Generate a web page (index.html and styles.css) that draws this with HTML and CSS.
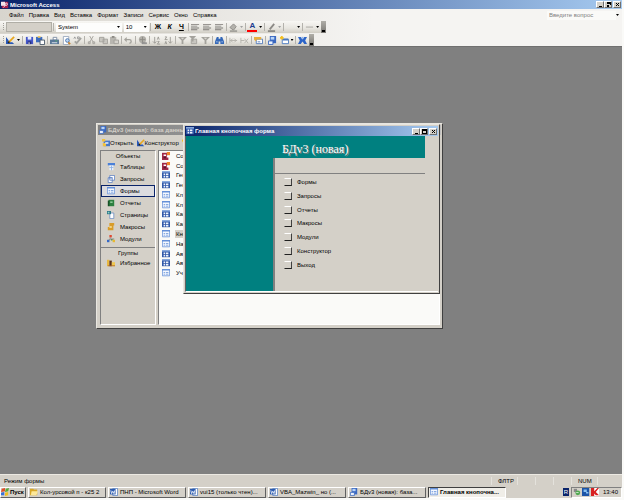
FILE: index.html
```html
<!DOCTYPE html>
<html lang="ru">
<head>
  <meta charset="UTF-8">
  <meta name="viewport" content="width=device-width, initial-scale=1.0">
  <title>Microsoft Access</title>
  <link rel="stylesheet" href="styles.css">
</head>
<body>

  <svg class="sprite" aria-hidden="true">
    <symbol id="i-access" viewBox="0 0 10 10"><path fill="#a8204c" d="M1 1h8v8H1z"/><path fill="#f4e4ea" d="M0 1h5v5H0z"/><path d="M3 8l3-3" stroke="#fff"/><circle cx="6.500" cy="4" r="1.500" fill="none" stroke="#fff"/></symbol>
    <symbol id="i-macrodb" viewBox="0 0 10 10"><path fill="#a02848" d="M0 1h8v9H0z"/><path fill="#f0842c" d="M6 0h4v4H6z"/><path fill="#fff" d="M2 3h3v2H2zM6 4h3v3H6z"/><path fill="#5a1830" d="M2 6h3v2H2z"/></symbol>
    <symbol id="i-design" viewBox="0 0 10 10"><path fill="#2858b8" d="M0 1v8h9L7 7H3V5z"/><path d="M3 7l6-6" stroke="#e8a820" stroke-width="2"/><path fill="#222" d="M2 6h2v2H2z"/></symbol>
    <symbol id="i-save" viewBox="0 0 10 10"><path fill="#4456c8" d="M1 1h8v8H1z"/><path fill="#e8ecfc" d="M3 1h4v3H3z"/><path fill="#26307c" d="M3 6h4v3H3z"/><path fill="#fff" d="M4 7h1v2H4z"/></symbol>
    <symbol id="i-lookup" viewBox="0 0 10 10"><path fill="#3c6cc0" d="M0 1h7v6H0z"/><path fill="#f0c860" d="M2 0h3v2H2z"/><path fill="#fff" stroke="#456" d="M4.500 4.500h5v5h-5z"/></symbol>
    <symbol id="i-print" viewBox="0 0 10 10"><path fill="#fff" stroke="#7a8aa0" d="M3.500 1.500h4v3h-4z"/><path fill="#5a7898" d="M0 4h10v5H0z"/><path fill="#58b068" d="M6 5h2v1H6z"/><path fill="#dfe6ee" d="M2 7h6v1H2z"/></symbol>
    <symbol id="i-preview" viewBox="0 0 10 10"><path fill="#fff" stroke="#9aa8bc" d="M1.500.500h6v9h-6z"/><circle cx="6" cy="5" r="2" fill="#bcd8f4" stroke="#4870a8"/><path d="M7 7l2 2" stroke="#c88430" stroke-width="2"/></symbol>
    <symbol id="i-check" viewBox="0 0 10 10"><path d="M1 3l1-2 1 2M5 1h2v2H5z" fill="none" stroke="#999"/><path d="M2 6l2 2 5-6" fill="none" stroke="#a4a4a0" stroke-width="2"/></symbol>
    <symbol id="i-cut" viewBox="0 0 10 10"><path d="M3 0l4 7M7 0L3 7" stroke="#a4a29c"/><path fill="none" stroke="#a4a29c" d="M1.500 6.500h2v2h-2zM6.500 6.500h2v2h-2z"/></symbol>
    <symbol id="i-copy" viewBox="0 0 10 10"><path fill="#c8c6c0" stroke="#a4a29c" d="M.500 1.500h5v5h-5zM4.500 3.500h5v5h-5z"/></symbol>
    <symbol id="i-paste" viewBox="0 0 10 10"><path fill="#b8b6b0" d="M0 1h7v8H0z"/><path fill="#d4d2cc" stroke="#a09e98" d="M4.500 4.500h5v4h-5z"/><path fill="#8c8a84" d="M2 0h3v2H2z"/></symbol>
    <symbol id="i-undo" viewBox="0 0 10 10"><path d="M2 4h4q2 0 2 2t-2 2" fill="none" stroke="#a4a29c" stroke-width="1.500"/><path fill="#a4a29c" d="M0 4l3-3v6z"/></symbol>
    <symbol id="i-globe" viewBox="0 0 10 10"><circle cx="5" cy="4" r="4" fill="#b0aea8"/><path fill="none" stroke="#8c8a84" d="M2 4h6M5 1v6"/><path fill="none" stroke="#888" d="M4.500 7.500h5v1h-5z"/></symbol>
    <symbol id="i-sortup" viewBox="0 0 10 10"><path d="M3 1v7M1 6l2 2 2-2M6 4l1-3 1 3M6 6h2l-2 3h3" fill="none" stroke="#9c9a94"/></symbol>
    <symbol id="i-sortdown" viewBox="0 0 10 10"><path d="M7 1v7M5 6l2 2 2-2M1 1h2L1 4h3M1 9l1-3 1 3" fill="none" stroke="#9c9a94"/></symbol>
    <symbol id="i-filter" viewBox="0 0 10 10"><path fill="#a4a29c" d="M0 1h10L6 5v4H4V5z"/><path fill="#d8d6d0" d="M3 2h4L5 4z"/></symbol>
    <symbol id="i-filterform" viewBox="0 0 10 10"><path fill="#c8c6c0" stroke="#a4a29c" d="M2.500 3.500h6v5h-6z"/><path fill="#a4a29c" d="M0 0h8L5 3v3H3V3z"/></symbol>
    <symbol id="i-find" viewBox="0 0 10 10"><path fill="#3468b8" d="M2 1h2v2h2V1h2l2 5v3H6V6H4v3H0V6z"/><path fill="#b8d0f0" d="M1 6h2v1H1zM7 6h2v1H7z"/></symbol>
    <symbol id="i-newrec" viewBox="0 0 10 10"><path d="M1 2v6M1 5h8M4 3l-2 2 2 2M6 3l2 2-2 2" fill="none" stroke="#b4b2ac"/></symbol>
    <symbol id="i-delrec" viewBox="0 0 10 10"><path d="M1 2v6M1 5h4M5 3l4 5M9 3L5 8" fill="none" stroke="#b4b2ac"/></symbol>
    <symbol id="i-props" viewBox="0 0 10 10"><path fill="#fff" stroke="#5078b8" d="M2.500 3.500h7v5h-7z"/><path fill="#e8b040" d="M0 1h8v3H3L2 6 0 4z"/><path fill="#5078b8" d="M4 6h3v1H4z"/></symbol>
    <symbol id="i-db" viewBox="0 0 10 10"><path fill="#3a68c0" d="M2 0h7v8H2z"/><path fill="#b8d4f8" d="M3 1h4v3H3z"/><path fill="#e8f0fc" stroke="#3a68c0" d="M.500 5.500h5v4h-5z"/></symbol>
    <symbol id="i-newobj" viewBox="0 0 10 10"><path fill="#fff" stroke="#4878c0" d="M2.500 3.500h7v5h-7z"/><path fill="#4878c0" d="M3 3h6v2H3z"/><path fill="#f4c020" d="M1 0h2v4H1zM0 1h4v2H0z"/></symbol>
    <symbol id="i-help" viewBox="0 0 10 10"><path fill="#2c64c8" d="M0 1h3l2 3 2-3h3L8 5l2 4H7L5 6 3 9H0l2-4z"/><path fill="#8cb4ec" d="M4 1h2v2H4z"/></symbol>
    <symbol id="i-align" viewBox="0 0 10 10"><path fill="#7c7a76" d="M0 1h9v1H0zM0 3h7v1H0zM0 5h9v1H0zM0 7h7v1H0z"/></symbol>
    <symbol id="i-fill" viewBox="0 0 10 10"><path fill="#b4b2ac" stroke="#8c8a86" d="M1 5l4-4 3 3-3 4z"/><path fill="#a4a29c" d="M1 8h8v2H1z"/></symbol>
    <symbol id="i-pen" viewBox="0 0 10 10"><path d="M3 7l5-6" stroke="#8c8a86" stroke-width="2"/><path fill="#8c8a86" d="M1 8h8v2H1z"/></symbol>
    <symbol id="i-line" viewBox="0 0 10 10"><path fill="#a4a29c" d="M1 4h8v1H1z"/></symbol>
    <symbol id="i-table" viewBox="0 0 10 10"><path fill="#4a80d8" d="M1 0h9v3H1z"/><path fill="#e8f0fc" d="M3 3h5v6H3z"/><path fill="#88aee4" d="M3 5h5v1H3zM5 3h1v6H5z"/></symbol>
    <symbol id="i-query" viewBox="0 0 10 10"><path fill="#fff" stroke="#587cc0" d="M3.500.500h6v6h-6zM1.500 3.500h5v6h-5z"/><path fill="#587cc0" d="M2 3h5v1H2z"/></symbol>
    <symbol id="i-form" viewBox="0 0 10 10"><path fill="#f4f8ff" stroke="#6490d8" d="M.500.500h9v8h-9z"/><path fill="#6490d8" d="M0 0h10v2H0zM2 4h2v1H2zM5 4h3v1H5zM2 6h2v1H2zM5 6h3v1H5z"/></symbol>
    <symbol id="i-formdark" viewBox="0 0 10 10"><path fill="#3058a8" d="M0 0h10v9H0z"/><path fill="#88a8dc" d="M0 0h10v2H0z"/><path fill="#f0f4fc" d="M2 3h2v2H2zM5 3h3v2H5zM2 6h2v2H2zM5 6h3v2H5z"/></symbol>
    <symbol id="i-report" viewBox="0 0 10 10"><path fill="#2c8040" d="M2 1h7v8H2z"/><path fill="#8cc898" d="M4 3h3v2H4z"/><path fill="#185028" d="M1 2h2v7H1z"/></symbol>
    <symbol id="i-page" viewBox="0 0 10 10"><path fill="#fff" stroke="#6c8cc0" d="M3.500 2.500h5v7h-5z"/><path fill="#2c7888" d="M0 0h5v4H0z"/><path fill="#90d0c8" d="M1 1h2v2H1z"/></symbol>
    <symbol id="i-macro" viewBox="0 0 10 10"><path fill="#d89c28" d="M3 0h6v3H8v6H1V5h2z"/><path fill="#f8e098" d="M3 4h3v2H3z"/></symbol>
    <symbol id="i-module" viewBox="0 0 10 10"><path fill="#e04830" d="M3 0h3v3H3z"/><path fill="#3468c8" d="M0 6h3v3H0z"/><path fill="#48a048" d="M5 5h2v2H5z"/><path fill="#e8b830" d="M7 6h3v3H7z"/><path fill="none" stroke="#777" d="M4 3v3H2M5 5h4"/></symbol>
    <symbol id="i-fav" viewBox="0 0 10 10"><path fill="#e8b840" d="M0 1h3v8H0z"/><path fill="#583018" d="M3 2h3v7H3z"/><path fill="#f0c850" d="M6 4h4v5H6z"/><path fill="#b06828" d="M1 8h9v1H1z"/></symbol>
    <symbol id="i-open" viewBox="0 0 10 10"><path fill="#4878c8" d="M2 2h8v7H2z"/><path fill="#f0c040" d="M0 0h4v3H0zM1 5h4v4H1z"/><path fill="#dce8fc" d="M4 4h4v2H4z"/></symbol>
    <symbol id="i-folder" viewBox="0 0 10 10"><path fill="#d8a828" d="M0 1h4l1 1h4v7H0z"/><path fill="#fce898" d="M2 4h8L8 9H1z"/></symbol>
    <symbol id="i-word" viewBox="0 0 10 10"><path fill="#fff" stroke="#5880c0" d="M3.500.500h6v9h-6z"/><path fill="#2c5cb0" d="M0 1h7v7H0z"/><path d="M1 3l1 4 1.500-3L5 7l1-4" stroke="#fff" fill="none"/></symbol>
    <symbol id="i-windows" viewBox="0 0 10 10"><path fill="#e05028" d="M1 1l4-1v4L0 5z"/><path fill="#58a838" d="M6 1l4-1-1 4-4 1z"/><path fill="#3870d8" d="M0 6l4-1v4L0 9z"/><path fill="#f0c020" d="M5 6l4-1v4l-4 1z"/></symbol>
    <symbol id="i-mic" viewBox="0 0 10 10"><path fill="#888" d="M1 1h4v4H1z"/><circle cx="6" cy="6" r="3" fill="#50a850"/><path fill="#e0f0e0" d="M4 5h3v1H4z"/></symbol>
    <symbol id="i-net" viewBox="0 0 10 10"><path fill="#1c54a8" d="M0 0h9v10H0z"/><path fill="#88c0f0" d="M2 2h4v3H2zM5 5h3v2H5z"/></symbol>
    <symbol id="i-shield" viewBox="0 0 10 10"><path fill="#fff" d="M0 0h10v10H0z"/><path fill="#d82020" d="M0 0h4v4l4-4h2L6 5l4 4H6L4 7v3H0z"/></symbol>
    <symbol id="i-min" viewBox="0 0 5 5"><path d="M1 4h3v1H1z"/></symbol>
    <symbol id="i-max" viewBox="0 0 5 5"><path d="M0 0h5v5H0zM1 2v2h3V2z" fill-rule="evenodd"/></symbol>
    <symbol id="i-restore" viewBox="0 0 5 5"><path d="M1 0h4v3H4V2H1zM1 3h2v2H1z"/></symbol>
    <symbol id="i-close" viewBox="0 0 5 5"><path d="M1 1l3 3M4 1L1 4" stroke="#000"/></symbol>
  </svg>

  <header class="titlebar app-title">
    <svg class="icon"><use href="#i-access"/></svg>
    <h1>Microsoft Access</h1>
    <div class="win-buttons">
      <button type="button" aria-label="Свернуть"><svg><use href="#i-min"/></svg></button>
      <button type="button" aria-label="Восстановить"><svg><use href="#i-restore"/></svg></button>
      <button type="button" aria-label="Закрыть" class="close"><svg><use href="#i-close"/></svg></button>
    </div>
  </header>

  <div class="bars">
    <nav class="menubar">
      <button type="button">Файл</button>
      <button type="button">Правка</button>
      <button type="button">Вид</button>
      <button type="button">Вставка</button>
      <button type="button">Формат</button>
      <button type="button">Записи</button>
      <button type="button">Сервис</button>
      <button type="button">Окно</button>
      <button type="button">Справка</button>
      <input type="text" class="ask" placeholder="Введите вопрос" aria-label="Введите вопрос">
      <span class="arrow"></span>
    </nav>

    <div class="toolbar format-bar">
      <span class="grip"></span>
      <select class="combo object" aria-label="Объект" disabled></select>
      <span class="sep"></span>
      <label class="combo-wrap font"><select class="combo" aria-label="Шрифт"><option>System</option></select><span class="arrow"></span></label>
      <label class="combo-wrap size"><select class="combo" aria-label="Размер"><option>10</option></select><span class="arrow"></span></label>
      <span class="sep"></span>
      <button type="button"><b>Ж</b></button>
      <button type="button"><b><i>К</i></b></button>
      <button type="button"><b><u>Ч</u></b></button>
      <span class="sep"></span>
      <button type="button" aria-label="По левому краю"><svg class="icon"><use href="#i-align"/></svg></button>
      <button type="button" aria-label="По центру"><svg class="icon"><use href="#i-align"/></svg></button>
      <button type="button" aria-label="По правому краю"><svg class="icon"><use href="#i-align"/></svg></button>
      <span class="sep"></span>
      <button type="button" aria-label="Цвет заливки"><svg class="icon"><use href="#i-fill"/></svg></button>
      <span class="arrow dim"></span>
      <span class="sep"></span>
      <button type="button" class="font-color">A</button>
      <span class="arrow"></span>
      <span class="sep"></span>
      <button type="button" aria-label="Цвет линии"><svg class="icon"><use href="#i-pen"/></svg></button>
      <span class="arrow dim"></span>
      <span class="sep"></span>
      <button type="button" aria-label="Толщина линии"></button>
      <span class="arrow"></span>
      <span class="sep"></span>
      <button type="button" aria-label="Оформление"><svg class="icon"><use href="#i-line"/></svg></button>
      <span class="arrow"></span>
      <span class="bar-end"></span>
    </div>

    <div class="toolbar standard-bar">
      <span class="grip"></span>
      <button type="button" aria-label="Вид"><svg class="icon"><use href="#i-design"/></svg></button>
      <span class="arrow"></span>
      <span class="sep"></span>
      <button type="button" aria-label="Сохранить"><svg class="icon"><use href="#i-save"/></svg></button>
      <button type="button" aria-label="Найти файл"><svg class="icon"><use href="#i-lookup"/></svg></button>
      <span class="sep"></span>
      <button type="button" aria-label="Печать"><svg class="icon"><use href="#i-print"/></svg></button>
      <button type="button" aria-label="Просмотр"><svg class="icon"><use href="#i-preview"/></svg></button>
      <button type="button" aria-label="Орфография"><svg class="icon"><use href="#i-check"/></svg></button>
      <span class="sep"></span>
      <button type="button" aria-label="Вырезать"><svg class="icon"><use href="#i-cut"/></svg></button>
      <button type="button" aria-label="Копировать"><svg class="icon"><use href="#i-copy"/></svg></button>
      <button type="button" aria-label="Вставить"><svg class="icon"><use href="#i-paste"/></svg></button>
      <span class="sep"></span>
      <button type="button" aria-label="Отменить"><svg class="icon"><use href="#i-undo"/></svg></button>
      <span class="sep"></span>
      <button type="button" aria-label="Гиперссылка"><svg class="icon"><use href="#i-globe"/></svg></button>
      <span class="sep"></span>
      <button type="button" aria-label="По возрастанию"><svg class="icon"><use href="#i-sortup"/></svg></button>
      <button type="button" aria-label="По убыванию"><svg class="icon"><use href="#i-sortdown"/></svg></button>
      <span class="sep"></span>
      <button type="button" aria-label="Фильтр по выделенному"><svg class="icon"><use href="#i-filter"/></svg></button>
      <button type="button" aria-label="Изменить фильтр"><svg class="icon"><use href="#i-filterform"/></svg></button>
      <button type="button" aria-label="Применить фильтр"><svg class="icon"><use href="#i-filter"/></svg></button>
      <span class="sep"></span>
      <button type="button" aria-label="Найти"><svg class="icon"><use href="#i-find"/></svg></button>
      <span class="sep"></span>
      <button type="button" aria-label="Новая запись"><svg class="icon"><use href="#i-newrec"/></svg></button>
      <button type="button" aria-label="Удалить запись"><svg class="icon"><use href="#i-delrec"/></svg></button>
      <span class="sep"></span>
      <button type="button" aria-label="Свойства"><svg class="icon"><use href="#i-props"/></svg></button>
      <span class="sep"></span>
      <button type="button" aria-label="Окно базы данных"><svg class="icon"><use href="#i-db"/></svg></button>
      <button type="button" aria-label="Новый объект"><svg class="icon"><use href="#i-newobj"/></svg></button>
      <span class="arrow"></span>
      <span class="sep"></span>
      <button type="button" aria-label="Справка"><svg class="icon"><use href="#i-help"/></svg></button>
      <span class="bar-end"></span>
    </div>
  </div>

  <main class="workspace">

    <section class="window db-window">
      <div class="titlebar inactive">
        <svg class="icon"><use href="#i-db"/></svg>
        <h2>БДv3 (новая): база данных</h2>
      </div>
      <div class="db-toolbar">
        <button type="button"><svg class="icon"><use href="#i-open"/></svg>Открыть</button>
        <button type="button"><svg class="icon"><use href="#i-design"/></svg>Конструктор</button>
        <button type="button" aria-label="Создать"><svg class="icon"><use href="#i-newobj"/></svg></button>
      </div>
      <div class="db-body">
        <div class="objects">
          <h3>Объекты</h3>
          <button type="button"><svg class="icon"><use href="#i-table"/></svg>Таблицы</button>
          <button type="button"><svg class="icon"><use href="#i-query"/></svg>Запросы</button>
          <button type="button" class="active"><svg class="icon"><use href="#i-form"/></svg>Формы</button>
          <button type="button"><svg class="icon"><use href="#i-report"/></svg>Отчеты</button>
          <button type="button"><svg class="icon"><use href="#i-page"/></svg>Страницы</button>
          <button type="button"><svg class="icon"><use href="#i-macro"/></svg>Макросы</button>
          <button type="button"><svg class="icon"><use href="#i-module"/></svg>Модули</button>
          <h3 class="groups">Группы</h3>
          <button type="button"><svg class="icon"><use href="#i-fav"/></svg>Избранное</button>
        </div>
        <div class="list-pane">
          <ul class="files">
            <li><svg class="icon"><use href="#i-macrodb"/></svg><span>Соз</span></li>
            <li><svg class="icon"><use href="#i-macrodb"/></svg><span>Соз</span></li>
            <li><svg class="icon"><use href="#i-formdark"/></svg><span>Ген</span></li>
            <li><svg class="icon"><use href="#i-formdark"/></svg><span>Ген</span></li>
            <li><svg class="icon"><use href="#i-form"/></svg><span>Кл</span></li>
            <li><svg class="icon"><use href="#i-form"/></svg><span>Кл</span></li>
            <li><svg class="icon"><use href="#i-formdark"/></svg><span>Каф</span></li>
            <li><svg class="icon"><use href="#i-formdark"/></svg><span>Каф</span></li>
            <li class="selected"><svg class="icon"><use href="#i-form"/></svg><span>Кно</span></li>
            <li><svg class="icon"><use href="#i-form"/></svg><span>Нак</span></li>
            <li><svg class="icon"><use href="#i-formdark"/></svg><span>Авт</span></li>
            <li><svg class="icon"><use href="#i-formdark"/></svg><span>Авт</span></li>
            <li><svg class="icon"><use href="#i-form"/></svg><span>Уч</span></li>
          </ul>
        </div>
      </div>
    </section>

    <section class="window form-window">
      <div class="titlebar">
        <svg class="icon"><use href="#i-formdark"/></svg>
        <h2>Главная кнопочная форма</h2>
        <div class="win-buttons">
          <button type="button" aria-label="Свернуть"><svg><use href="#i-min"/></svg></button>
          <button type="button" aria-label="Развернуть"><svg><use href="#i-max"/></svg></button>
          <button type="button" aria-label="Закрыть" class="close"><svg><use href="#i-close"/></svg></button>
        </div>
      </div>
      <div class="form-body">
        <div class="banner">БДv3 (новая)</div>
        <div class="side"></div>
        <div class="switchboard">
          <div class="rule"></div>
          <div class="options">
            <button type="button"><span class="box"></span>Формы</button>
            <button type="button"><span class="box"></span>Запросы</button>
            <button type="button"><span class="box"></span>Отчеты</button>
            <button type="button"><span class="box"></span>Макросы</button>
            <button type="button"><span class="box"></span>Модули</button>
            <button type="button"><span class="box"></span>Конструктор</button>
            <button type="button"><span class="box"></span>Выход</button>
          </div>
        </div>
      </div>
    </section>

  </main>

  <div class="statusbar">
    <span class="mode">Режим формы</span>
    <span class="cell">ФЛТР</span>
    <span class="cell narrow"></span>
    <span class="cell narrow"></span>
    <span class="cell narrow"></span>
    <span class="cell">NUM</span>
    <span class="cell"></span>
  </div>

  <footer class="taskbar">
    <button type="button" class="start"><svg class="icon"><use href="#i-windows"/></svg>Пуск</button>
    <div class="tasks">
      <button type="button"><svg class="icon"><use href="#i-folder"/></svg><span>Кол-урсовой п - к25 2</span></button>
      <button type="button"><svg class="icon"><use href="#i-word"/></svg><span>ПНП - Microsoft Word</span></button>
      <button type="button"><svg class="icon"><use href="#i-word"/></svg><span>vui15 (только чтен)...</span></button>
      <button type="button"><svg class="icon"><use href="#i-word"/></svg><span>VBA_Mazwin_ но (...</span></button>
      <button type="button"><svg class="icon"><use href="#i-db"/></svg><span>БДv3 (новая): база...</span></button>
      <button type="button" class="current"><svg class="icon"><use href="#i-form"/></svg><span>Главная кнопочна...</span></button>
    </div>
    <span class="lang">R</span>
    <div class="tray">
      <svg class="icon"><use href="#i-mic"/></svg>
      <svg class="icon"><use href="#i-net"/></svg>
      <svg class="icon"><use href="#i-shield"/></svg>
      <time>13:40</time>
    </div>
  </footer>

</body>
</html>
```
FILE: styles.css
```css
* {
  box-sizing: border-box;
}
body {
  margin: 0;
  padding: 0 2px 2px 0;
  min-height: 100vh;
  display: flex;
  flex-direction: column;
  background: #fafaf8;
  color: #000;
  font: 6px/8px "Liberation Sans", Arial, sans-serif;
}
button, input, select {
  margin: 0;
  padding: 0;
  border: none;
  border-radius: 0;
  background: none;
  color: inherit;
  font: inherit;
}
h1, h2, h3, ul {
  margin: 0;
  padding: 0;
  font-size: inherit;
}
.sprite {
  display: none;
}
.icon {
  width: 8px;
  height: 8px;
  flex: none;
}

/* title bars */
.titlebar {
  display: flex;
  align-items: center;
  gap: 1px;
  height: 10px;
  padding: 0 1px;
  background: linear-gradient(to right, #0a246a, #a6caf0);
  color: #fff;
  white-space: nowrap;
}
.titlebar.inactive {
  background: linear-gradient(to right, #808080, #c0c0c0);
  color: #d4d0c8;
}
.app-title {
  height: 9px;
}
.win-buttons {
  display: flex;
  margin-left: auto;
}
.win-buttons button {
  display: flex;
  align-items: center;
  justify-content: center;
  width: 8px;
  height: 7px;
  background: #d4d0c8;
  border: 1px solid;
  border-color: #fff #707070 #707070 #fff;
}
.win-buttons .close {
  margin-left: 1px;
}
.win-buttons svg {
  width: 5px;
  height: 5px;
  flex: none;
}

/* menu and toolbars */
.bars {
  height: 37px;
  background: linear-gradient(to right, #d8d5ce, #f5f4f2 60%);
}
.menubar {
  display: flex;
  align-items: center;
  gap: 5px;
  height: 12px;
  padding: 0 3px 0 9px;
}
.ask {
  width: 69px;
  height: 9px;
  margin-left: auto;
  padding: 0 2px;
  background: #fafaf8;
}
.ask::placeholder {
  color: #808080;
}
.menubar .arrow {
  margin-left: -5px;
}
.arrow {
  flex: none;
  width: 3px;
  height: 2px;
  background: #000;
  clip-path: polygon(0 0, 100% 0, 50% 100%);
}
.arrow.dim {
  background: #a0a0a0;
}
.toolbar {
  display: flex;
  align-items: center;
  justify-content: space-between;
  height: 12px;
  padding-left: 3px;
  background: linear-gradient(#f8f7f4, #e8e6e0 60%, #d0cdc4);
}
.format-bar {
  width: 326px;
  margin-bottom: 1px;
}
.standard-bar {
  width: 314px;
}
.toolbar button {
  display: flex;
  align-items: center;
  justify-content: center;
  width: 10px;
  height: 10px;
}
.toolbar .icon {
  width: 9px;
  height: 9px;
}
.toolbar b {
  font-size: 7px;
}
.grip {
  width: 1px;
  height: 8px;
  background: repeating-linear-gradient(#a09e98 0 1px, transparent 1px 2px);
}
.sep {
  width: 1px;
  height: 8px;
  background: #b4b2ac;
}
.bar-end {
  display: flex;
  align-items: flex-end;
  justify-content: center;
  width: 5px;
  height: 12px;
  background: linear-gradient(#b0aea8, #787672);
}
.bar-end::after {
  content: "";
  width: 3px;
  height: 2px;
  margin-bottom: 1px;
  background: #000;
}
.combo {
  appearance: none;
  width: 100%;
  height: 9px;
  padding-left: 2px;
  background: #fdfdfc;
}
.combo.object {
  width: 46px;
  height: 10px;
  background: #d4d0c8;
  border: 1px solid #b0aea6;
  opacity: 1;
}
.combo-wrap {
  display: flex;
  align-items: center;
  padding-right: 2px;
  background: #fdfdfc;
}
.combo-wrap.font {
  width: 66px;
}
.combo-wrap.size {
  width: 25px;
}
.toolbar .font-color {
  border-bottom: 2px solid #f00;
  color: #1c3c90;
  font-size: 8px;
  font-weight: bold;
}

/* workspace */
.workspace {
  position: relative;
  flex: 1;
  background: #808080;
  border-top: 1px solid #707070;
}
.window {
  position: absolute;
  display: flex;
  flex-direction: column;
  padding: 1px;
  background: #d4d0c8;
  border: 1px solid;
  border-color: #e8e6e0 #404040 #404040 #e8e6e0;
}
.db-window {
  left: 96px;
  top: 76px;
  width: 347px;
  height: 206px;
}
.form-window {
  left: 183px;
  top: 77px;
  width: 257px;
  height: 170px;
}
.db-toolbar {
  display: flex;
  align-items: center;
  gap: 3px;
  height: 15px;
  padding-left: 4px;
}
.db-toolbar button {
  display: flex;
  align-items: center;
}
.db-body {
  flex: 1;
  display: grid;
  grid-template-columns: 56px 1fr;
  gap: 2px;
  padding: 0 1px 2px 2px;
}
.objects, .list-pane {
  border: 1px solid;
  border-color: #808080 #fff #fff #808080;
}
.objects h3 {
  height: 10px;
  line-height: 10px;
  font-weight: normal;
  text-align: center;
}
.objects .groups {
  margin-top: 2px;
  border-top: 1px solid #808080;
}
.objects button {
  display: flex;
  align-items: center;
  gap: 5px;
  width: 100%;
  height: 12px;
  padding-left: 5px;
  border: 1px solid transparent;
}
.objects .active {
  background: #dcdce0;
  border-color: #0a246a;
}
.list-pane {
  background: #fafaf8;
}
.files {
  display: grid;
  grid-auto-rows: 1fr;
  height: 127px;
  list-style: none;
}
.files li {
  display: flex;
  align-items: center;
  gap: 5px;
  padding-left: 3px;
}
.files span {
  padding: 0 1px;
}
.files .selected span {
  background: #d4d0c8;
}

/* switchboard form */
.form-body {
  flex: 1;
  display: grid;
  grid-template: 22px 1fr / 87px 1fr;
  border-left: 1px solid #606060;
  border-bottom: 1px solid #fff;
}
.banner {
  grid-column: 1 / 3;
  margin-right: 13px;
  padding-left: 96px;
  background: #008080;
  color: #fff;
  font: 12px/26px "Liberation Serif", "Times New Roman", serif;
  text-shadow: 1px 1px #808080;
}
.side {
  background: #008080;
}
.switchboard {
  border-left: 2px solid #808080;
}
.rule {
  height: 16px;
  margin-right: 13px;
  border-bottom: 1px solid #808080;
}
.options {
  display: grid;
  grid-auto-rows: 1fr;
  height: 98px;
  padding: 1px 0 0 9px;
}
.options button {
  display: flex;
  align-items: center;
  gap: 5px;
  text-align: left;
}
.box {
  width: 8px;
  height: 8px;
  border: 1px solid;
  border-color: #fff #404040 #202020 #d4d0c8;
}

/* status and task bars */
.statusbar {
  display: flex;
  align-items: center;
  gap: 1px;
  height: 12px;
  padding: 1px 0 1px 4px;
  background: #d4d0c8;
  border-top: 1px solid #ece9e2;
}
.mode {
  flex: 1;
}
.cell {
  width: 25px;
  height: 8px;
  padding-left: 6px;
  border-left: 1px solid #e4e2dc;
}
.cell.narrow {
  width: 17px;
}
.taskbar {
  display: flex;
  align-items: center;
  gap: 2px;
  height: 12px;
  background: #d4d0c8;
}
.taskbar button {
  display: flex;
  align-items: center;
  gap: 2px;
  height: 11px;
  padding: 0 1px;
  border: 1px solid;
  border-color: #fff #606060 #606060 #fff;
  white-space: nowrap;
}
.taskbar .start {
  width: 26px;
  padding: 0;
  gap: 1px;
  font-weight: bold;
}
.tasks {
  flex: 1;
  display: grid;
  grid-template-columns: repeat(6, minmax(0, 78px));
  gap: 2px;
}
.tasks .current {
  background: #f0eee8;
  border-color: #404040 #fff #fff #404040;
  font-weight: bold;
}
.lang {
  padding: 0 1px;
  background: #0a246a;
  color: #fff;
}
.tray {
  display: flex;
  align-items: center;
  gap: 1px;
  height: 11px;
  padding: 0 3px 0 1px;
  border: 1px solid;
  border-color: #808080 #fff #fff #808080;
}
.tray time {
  margin-left: 3px;
}
```
